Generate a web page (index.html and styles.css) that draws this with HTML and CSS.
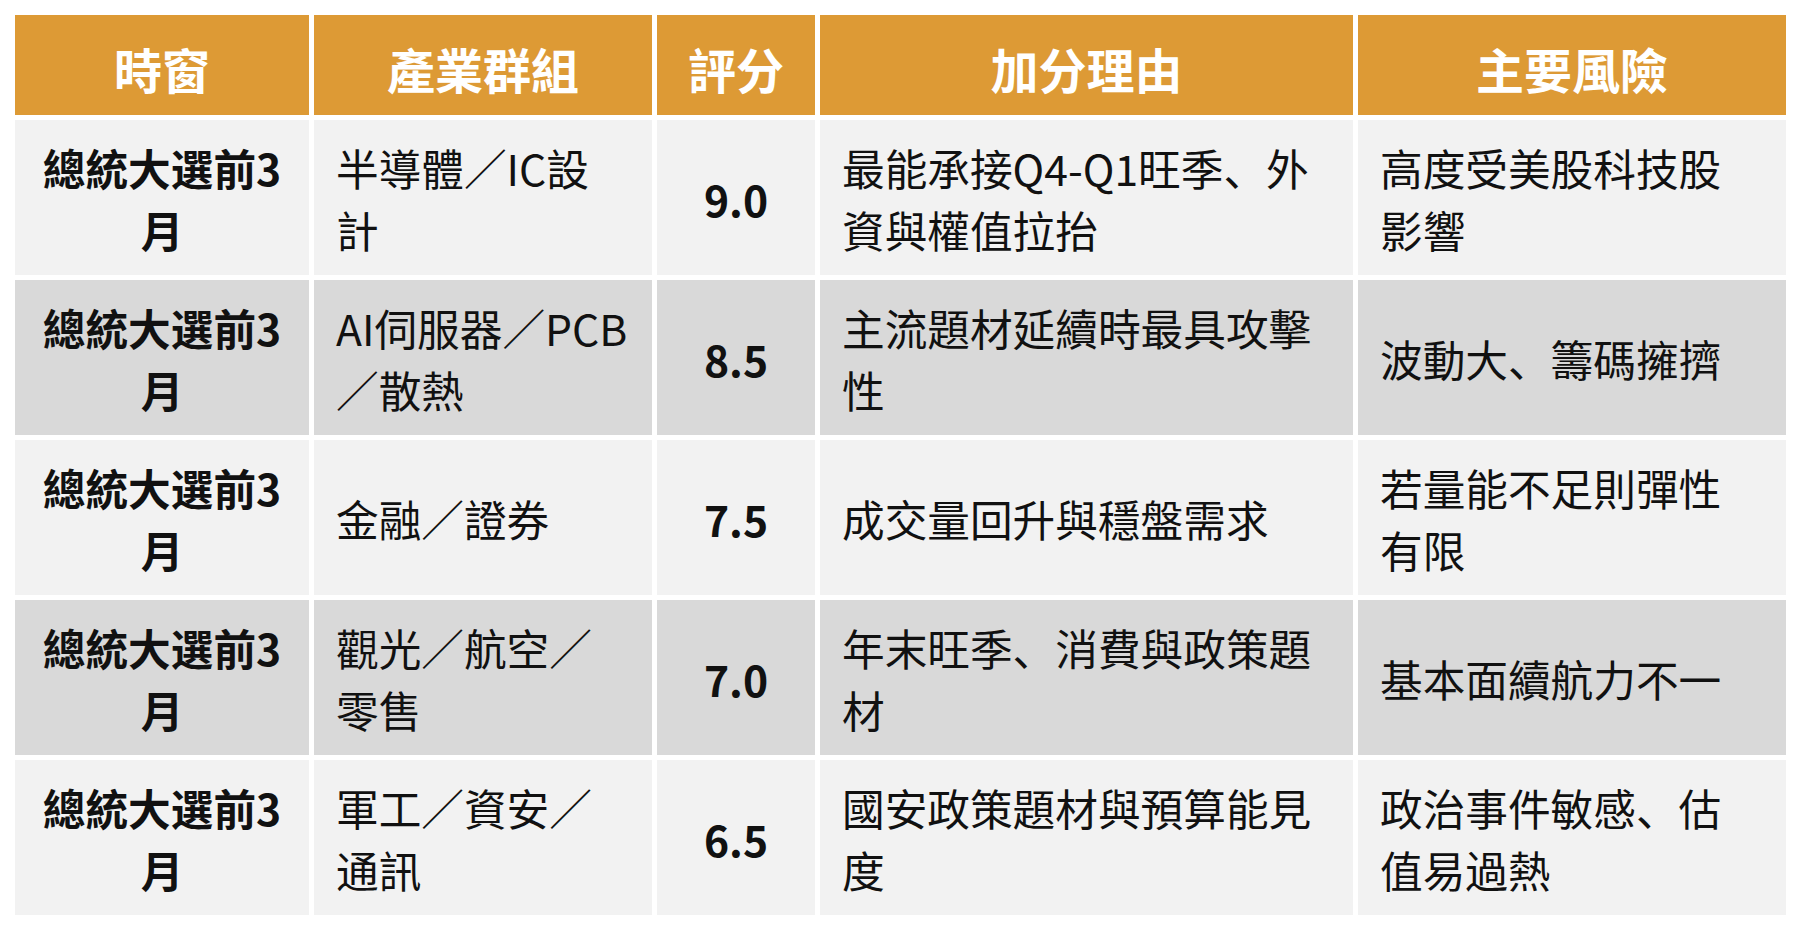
FILE: index.html
```html
<!DOCTYPE html>
<html>
<head>
<meta charset="utf-8">
<title>時窗評分表</title>
<link rel="stylesheet" href="styles.css">
</head>
<body>
<div class="sheet">
  <div class="grid">
    <div class="cell head">時窗</div>
    <div class="cell head">產業群組</div>
    <div class="cell head">評分</div>
    <div class="cell head">加分理由</div>
    <div class="cell head">主要風險</div>

    <div class="cell light window">總統大選前3月</div>
    <div class="cell light group">半導體／IC設計</div>
    <div class="cell light score">9.0</div>
    <div class="cell light reason">最能承接Q4-Q1旺季、外資與權值拉抬</div>
    <div class="cell light risk">高度受美股科技股影響</div>

    <div class="cell dark window">總統大選前3月</div>
    <div class="cell dark group">AI伺服器／PCB／散熱</div>
    <div class="cell dark score">8.5</div>
    <div class="cell dark reason">主流題材延續時最具攻擊性</div>
    <div class="cell dark risk">波動大、籌碼擁擠</div>

    <div class="cell light window">總統大選前3月</div>
    <div class="cell light group">金融／證券</div>
    <div class="cell light score">7.5</div>
    <div class="cell light reason">成交量回升與穩盤需求</div>
    <div class="cell light risk">若量能不足則彈性有限</div>

    <div class="cell dark window">總統大選前3月</div>
    <div class="cell dark group">觀光／航空／零售</div>
    <div class="cell dark score">7.0</div>
    <div class="cell dark reason">年末旺季、消費與政策題材</div>
    <div class="cell dark risk">基本面續航力不一</div>

    <div class="cell light window">總統大選前3月</div>
    <div class="cell light group">軍工／資安／通訊</div>
    <div class="cell light score">6.5</div>
    <div class="cell light reason">國安政策題材與預算能見度</div>
    <div class="cell light risk">政治事件敏感、估值易過熱</div>
  </div>
</div>
</body>
</html>
```

FILE: styles.css
```css
html, body {
  margin: 0;
  padding: 0;
  background: #ffffff;
}

body {
  font-family: "Noto Sans CJK SC", "Noto Sans CJK TC", "Noto Sans", sans-serif;
  color: #111111;
}

.sheet {
  padding: 15px 0 0 15px;
}

.grid {
  display: grid;
  grid-template-columns: 294px 338px 158px 533px 428px;
  grid-template-rows: 100px repeat(5, 155px);
  gap: 5px;
  width: 1771px;
}

.cell {
  display: flex;
  align-items: center;
  box-sizing: border-box;
  font-size: 42.67px;
  line-height: 1.45;
  padding: 2px 22px 0 22px;
}

.head {
  background: #dd9a35;
  color: #ffffff;
  font-weight: 700;
  font-size: 48px;
  justify-content: center;
  text-align: center;
  padding-top: 8px;
}

.light {
  background: #f2f2f2;
}

.dark {
  background: #d9d9d9;
}

.window {
  font-weight: 700;
  justify-content: center;
  text-align: center;
  padding-left: 12px;
  padding-right: 12px;
}

.group {
  padding-right: 23px;
}

.score {
  font-weight: 700;
  justify-content: center;
  text-align: center;
}

.risk {
  padding-right: 24px;
}
```
